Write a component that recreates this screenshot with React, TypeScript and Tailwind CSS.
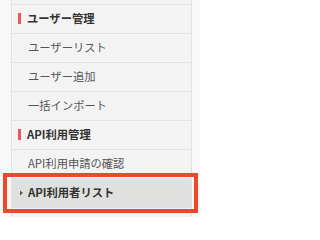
import { ReactNode } from 'react';

type Item = { label: string; kind: 'header' | 'link' | 'active' };

const items: Item[] = [
  { label: 'ユーザー管理', kind: 'header' },
  { label: 'ユーザーリスト', kind: 'link' },
  { label: 'ユーザー追加', kind: 'link' },
  { label: '一括インポート', kind: 'link' },
  { label: 'API利用管理', kind: 'header' },
  { label: 'API利用申請の確認', kind: 'link' },
  { label: 'API利用者リスト', kind: 'active' },
];

function Row({ item }: { item: Item }) {
  let content: ReactNode;
  if (item.kind === 'header') {
    content = (
      <div className="flex items-center pl-[6px] gap-[6px]">
        <span className="block w-[3px] h-[11px] bg-[#e8575c]" />
        <span className="font-bold text-[#333]">{item.label}</span>
      </div>
    );
  } else if (item.kind === 'active') {
    content = (
      <div className="flex items-center pl-[7px]">
        <svg width="9" height="8" viewBox="0 0 9 8" className="shrink-0">
          <path d="M1 1.5 L4 4 L1 6.5 Z" fill="#555" />
        </svg>
        <span className="font-bold text-[#333]">{item.label}</span>
      </div>
    );
  } else {
    content = <div className="pl-[16px] text-[#555]">{item.label}</div>;
  }
  return (
    <li
      className={`h-[29px] flex items-center border-b border-[#e2e2e2] ${
        item.kind === 'active' ? 'bg-[#e0e0de]' : ''
      }`}
    >
      {content}
    </li>
  );
}

export default function App() {
  return (
    <div
      className="relative w-[200px] h-[217px] overflow-hidden bg-[#f8f8f8] text-[11.3px] leading-none"
      style={{ fontFamily: '"Noto Sans CJK JP", "Noto Sans", sans-serif' }}
    >
      <div className="ml-[11px] w-[181px] h-full bg-[#f3f3f3] border-x border-[#e2e2e2]">
        <ul>
          <li className="h-[5px] border-b border-[#e2e2e2]" />
          {items.map((item) => (
            <Row key={item.label} item={item} />
          ))}
        </ul>
      </div>
      {/* highlight box drawn over the active item */}
      <div className="absolute left-[3px] top-[173px] w-[195px] h-[40px] border-4 border-[#f0462b]" />
    </div>
  );
}
